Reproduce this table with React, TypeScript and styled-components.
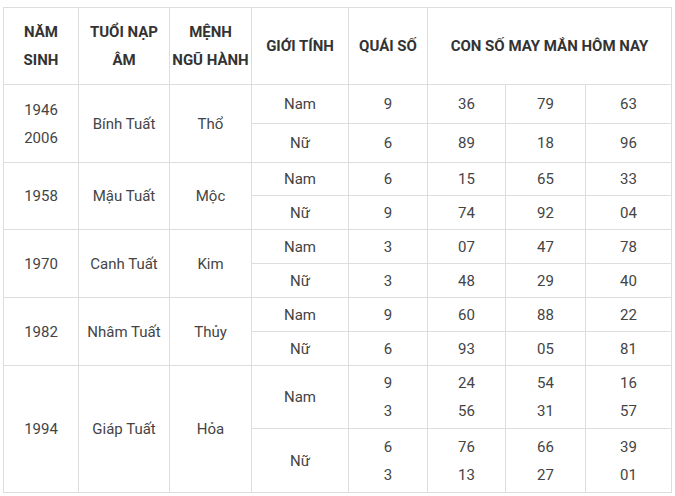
import React from "react";
import styled, { createGlobalStyle } from "styled-components";

const Global = createGlobalStyle`
  html, body { margin: 0; padding: 0; background: #fff; }
  body { font-family: Roboto, "Liberation Sans", Arial, sans-serif; }
`;

const Page = styled.div`
  padding: 7px 4px 0 3px;
`;

const Table = styled.table`
  border-collapse: collapse;
  table-layout: fixed;
  width: 668px;
  font-family: Roboto, "Liberation Sans", Arial, sans-serif;
  font-size: 15px;
  line-height: 28px;
  color: #444;
`;

const Th = styled.th`
  border: 1px solid #ddd;
  font-weight: 700;
  color: #333;
  text-align: center;
  vertical-align: middle;
  padding: 0;
  white-space: nowrap;
  height: 76px;
`;

const Td = styled.td`
  border: 1px solid #ddd;
  text-align: center;
  vertical-align: middle;
  padding: 0;
  white-space: nowrap;
`;

const Row = styled.tr<{ $h: number }>`
  height: ${(p) => p.$h}px;
`;

type Sub = { g: string; q: string[]; n: string[][]; h: number };
type Group = { year: string[]; nap: string; menh: string; subs: Sub[] };

const data: Group[] = [
  {
    year: ["1946", "2006"],
    nap: "Bính Tuất",
    menh: "Thổ",
    subs: [
      { g: "Nam", q: ["9"], n: [["36", "79", "63"]], h: 39 },
      { g: "Nữ", q: ["6"], n: [["89", "18", "96"]], h: 39 },
    ],
  },
  {
    year: ["1958"],
    nap: "Mậu Tuất",
    menh: "Mộc",
    subs: [
      { g: "Nam", q: ["6"], n: [["15", "65", "33"]], h: 33 },
      { g: "Nữ", q: ["9"], n: [["74", "92", "04"]], h: 34 },
    ],
  },
  {
    year: ["1970"],
    nap: "Canh Tuất",
    menh: "Kim",
    subs: [
      { g: "Nam", q: ["3"], n: [["07", "47", "78"]], h: 34 },
      { g: "Nữ", q: ["3"], n: [["48", "29", "40"]], h: 34 },
    ],
  },
  {
    year: ["1982"],
    nap: "Nhâm Tuất",
    menh: "Thủy",
    subs: [
      { g: "Nam", q: ["9"], n: [["60", "88", "22"]], h: 34 },
      { g: "Nữ", q: ["6"], n: [["93", "05", "81"]], h: 34 },
    ],
  },
  {
    year: ["1994"],
    nap: "Giáp Tuất",
    menh: "Hỏa",
    subs: [
      { g: "Nam", q: ["9", "3"], n: [["24", "54", "16"], ["56", "31", "57"]], h: 63 },
      { g: "Nữ", q: ["6", "3"], n: [["76", "66", "39"], ["13", "27", "01"]], h: 64 },
    ],
  },
];

const Lines = ({ items }: { items: string[] }) => (
  <>
    {items.map((t, i) => (
      <React.Fragment key={i}>
        {i > 0 && <br />}
        {t}
      </React.Fragment>
    ))}
  </>
);

const widths = [75, 91, 82, 97, 79, 78, 80, 86];

export default function App() {
  return (
    <>
      <Global />
      <Page>
        <Table>
          <colgroup>
            {widths.map((w, i) => (
              <col key={i} style={{ width: w }} />
            ))}
          </colgroup>
          <thead>
            <tr>
              <Th>
                NĂM
                <br />
                SINH
              </Th>
              <Th>
                TUỔI NẠP
                <br />
                ÂM
              </Th>
              <Th>
                MỆNH
                <br />
                NGŨ HÀNH
              </Th>
              <Th>GIỚI TÍNH</Th>
              <Th>QUÁI SỐ</Th>
              <Th colSpan={3}>CON SỐ MAY MẮN HÔM NAY</Th>
            </tr>
          </thead>
          <tbody>
            {data.map((g) =>
              g.subs.map((s, si) => (
                <Row key={g.nap + si} $h={s.h}>
                  {si === 0 && (
                    <>
                      <Td rowSpan={g.subs.length}>
                        <Lines items={g.year} />
                      </Td>
                      <Td rowSpan={g.subs.length}>{g.nap}</Td>
                      <Td rowSpan={g.subs.length}>{g.menh}</Td>
                    </>
                  )}
                  <Td>{s.g}</Td>
                  <Td>
                    <Lines items={s.q} />
                  </Td>
                  {[0, 1, 2].map((c) => (
                    <Td key={c}>
                      <Lines items={s.n.map((r) => r[c])} />
                    </Td>
                  ))}
                </Row>
              ))
            )}
          </tbody>
        </Table>
      </Page>
    </>
  );
}
